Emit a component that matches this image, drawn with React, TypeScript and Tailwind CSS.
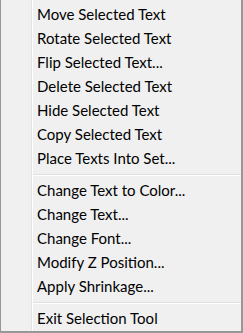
import React from 'react';

const groups: string[][] = [
	[
		'Move Selected Text',
		'Rotate Selected Text',
		'Flip Selected Text...',
		'Delete Selected Text',
		'Hide Selected Text',
		'Copy Selected Text',
		'Place Texts Into Set...',
	],
	[
		'Change Text to Color...',
		'Change Text...',
		'Change Font...',
		'Modify Z Position...',
		'Apply Shrinkage...',
	],
	['Exit Selection Tool'],
];

const Separator = () => (
	<div className="pt-[4px] pb-[2px]">
		<div className="h-px bg-[#e0e0e0]" />
		<div className="h-px bg-white" />
	</div>
);

export default function App() {
	return (
		<div className="w-[243px] h-[333px] bg-[#f0f0f0] border-l border-r-2 border-b-2 border-[#979797] flex font-['Lato',sans-serif] text-[15px] text-black overflow-hidden">
			{/* icon gutter */}
			<div className="w-[30px] shrink-0" />
			<div className="w-px shrink-0 bg-[#e2e3e3]" />
			<div className="w-px shrink-0 bg-white" />
			<div className="flex-1 flex flex-col pt-[2px]">
				{groups.map((items, gi) => (
					<React.Fragment key={gi}>
						{gi > 0 && <Separator />}
						{items.map((label) => (
							<div
								key={label}
								className="h-[24px] leading-[24px] pl-[4px] whitespace-nowrap">
								{label}
							</div>
						))}
					</React.Fragment>
				))}
			</div>
		</div>
	);
}
